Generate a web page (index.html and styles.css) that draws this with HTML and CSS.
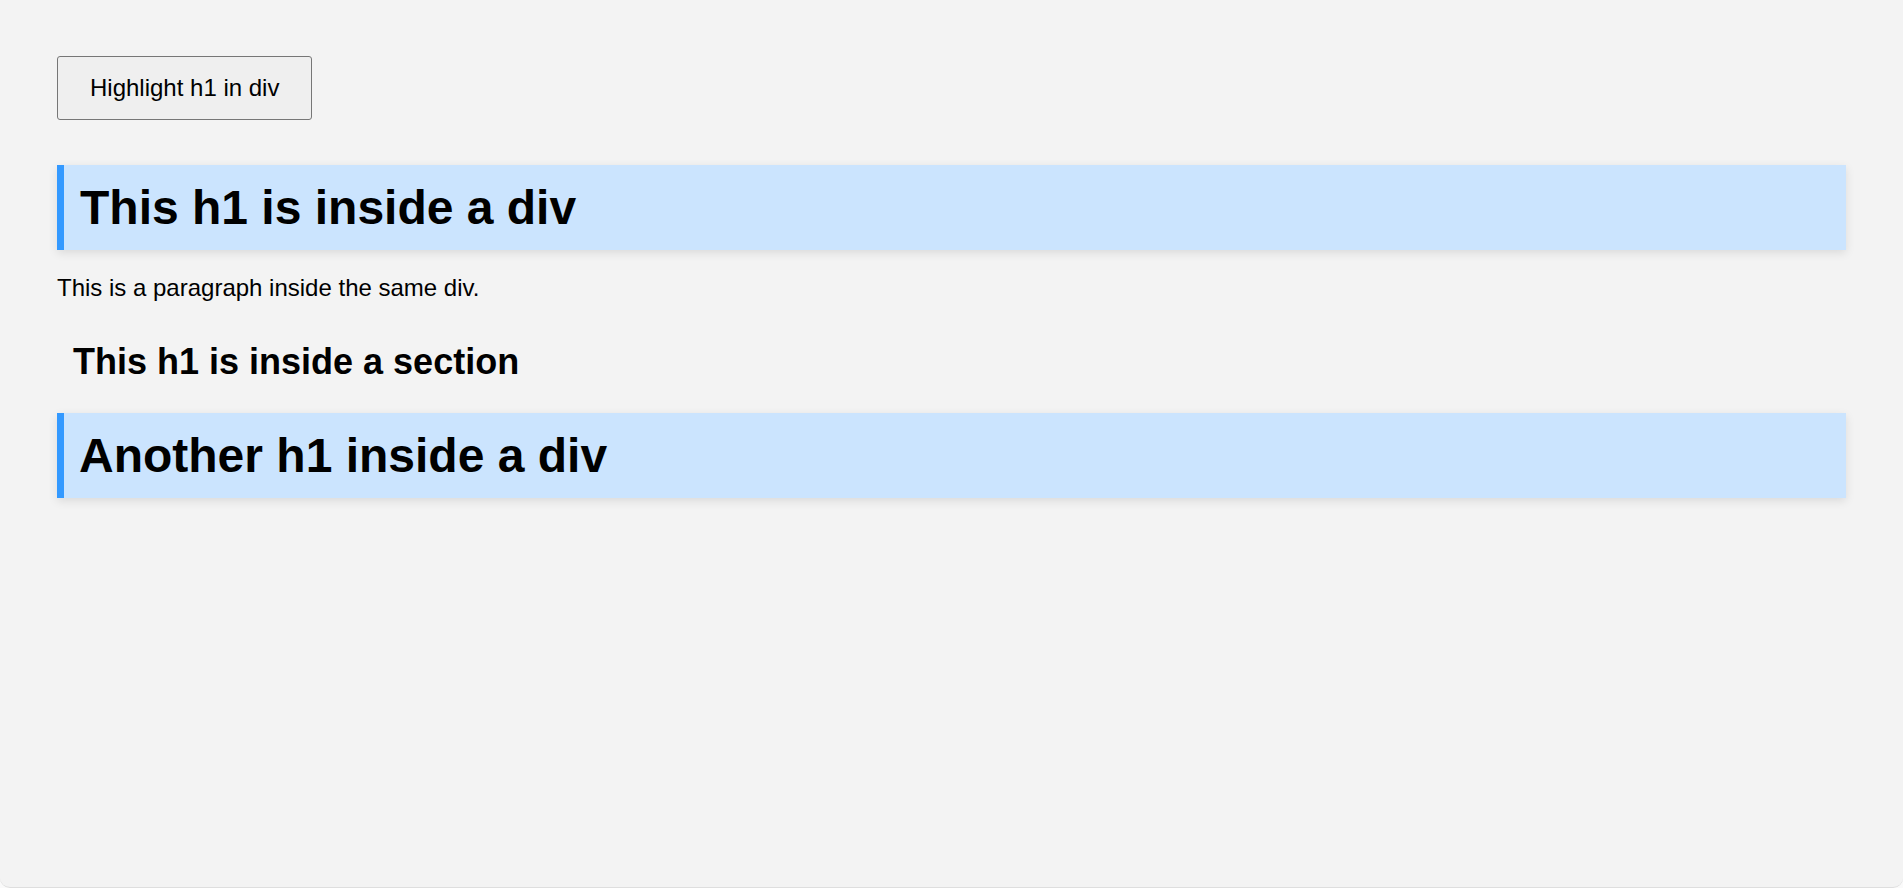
FILE: index.html
```html
<!DOCTYPE html>
<html lang="en">
<head>
<meta charset="utf-8">
<title>Highlight h1 in div</title>
<link rel="stylesheet" href="styles.css">
</head>
<body>
<div class="page">
  <div class="controls">
    <button class="btn" type="button">Highlight h1 in div</button>
  </div>
  <div class="block">
    <h1 class="heading heading-hl heading-first">This h1 is inside a div</h1>
    <p class="text">This is a paragraph inside the same div.</p>
  </div>
  <section class="block">
    <h1 class="heading heading-section">This h1 is inside a section</h1>
  </section>
  <div class="block">
    <h1 class="heading heading-hl">Another h1 inside a div</h1>
  </div>
</div>
</body>
</html>
```
FILE: styles.css
```css
html {
  background: #fafafa;
}
body {
  margin: 0;
  font-family: "Liberation Sans", Arial, sans-serif;
  color: #000;
}
.page {
  box-sizing: border-box;
  height: 888px;
  padding: 56px 57px;
  background: #f3f3f3;
  border-radius: 0 0 10px 10px;
  border-bottom: 1px solid #dedede;
  overflow: hidden;
}
.controls {
  display: flex;
  margin-bottom: 45px;
}
.btn {
  box-sizing: border-box;
  height: 64px;
  padding: 0 32px;
  font-family: "Liberation Sans", Arial, sans-serif;
  font-size: 24px;
  color: #000;
  background: #efefef;
  border: 1px solid #767676;
  border-radius: 3px;
  cursor: pointer;
}
.heading {
  margin: 15px 0;
  padding: 15px;
  font-weight: bold;
}
.heading-hl {
  font-size: 48px;
  background: #cbe4fe;
  border-left: 7px solid #3399ff;
  padding-left: 15px;
  box-shadow: 0 3px 9px rgba(0, 0, 0, 0.1);
}
.heading-first {
  padding-left: 16px;
}
.heading-section {
  font-size: 36px;
  padding-left: 16px;
}
.text {
  margin: 24px 0;
  font-size: 24px;
}
```
